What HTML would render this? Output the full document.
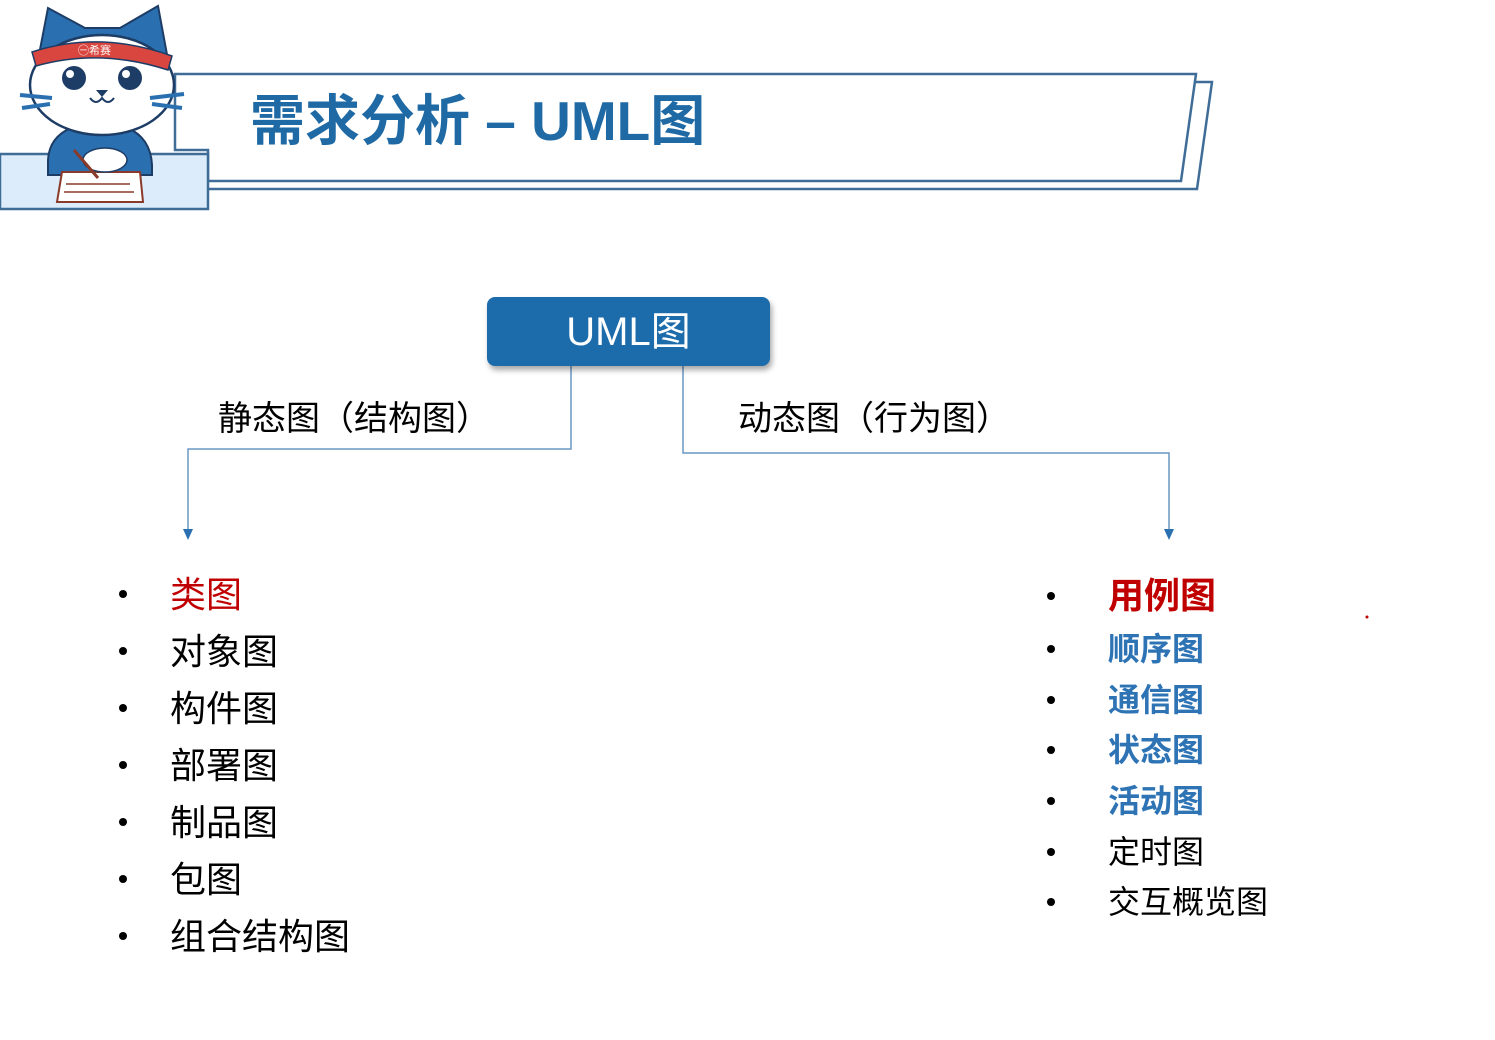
<!DOCTYPE html>
<html><head><meta charset="utf-8"><style>
body{margin:0;width:1495px;height:1040px;background:#fff;position:relative;overflow:hidden;font-family:"Liberation Sans","Noto Sans CJK SC",sans-serif}
.t{position:absolute;white-space:nowrap;line-height:1}
.b{position:absolute;width:8px;height:8px;border-radius:50%;background:#000}
</style></head><body>
<svg width="1495" height="1040" style="position:absolute;left:0;top:0">
<g fill="none" stroke="#3f6d97" stroke-width="2.5">
<polyline points="1196,82 1212,82 1197,189 208,189"/>
<polygon points="175,74 1196,74 1181,181 208,181 208,150 175,150" fill="#fff"/>
</g>
<rect x="0" y="154" width="208" height="55" fill="#dcecfa" stroke="#3f6d97" stroke-width="2.5"/>
<path d="M38,60 L48,8 L85,28 L120,28 L158,6 L168,60 Z" fill="#2a6fb0" stroke="#1d3d66" stroke-width="2"/>
<path d="M48,160 Q50,125 100,122 Q150,125 152,165 L152,175 L48,175 Z" fill="#2a6fb0" stroke="#1d3d66" stroke-width="2"/>
<ellipse cx="102" cy="85" rx="72" ry="50" fill="#fff" stroke="#1d3d66" stroke-width="2.5"/>
<path d="M32,52 Q100,30 172,56 L168,70 Q100,48 36,66 Z" fill="#d9463f" stroke="#1d3d66" stroke-width="1.5"/>
<text x="78" y="54" font-size="11" fill="#fff" font-family="Liberation Sans,Noto Sans CJK SC,sans-serif">㊀希赛</text>
<circle cx="74" cy="78" r="12" fill="#1d3d66"/><circle cx="130" cy="78" r="12" fill="#1d3d66"/>
<circle cx="70" cy="74" r="4" fill="#fff"/><circle cx="126" cy="74" r="4" fill="#fff"/>
<path d="M96,90 L108,90 L102,97 Z" fill="#1d3d66"/>
<path d="M90,98 Q96,106 102,98 Q108,106 114,98" fill="none" stroke="#1d3d66" stroke-width="2"/>
<path d="M20,95 L52,98 M22,108 L50,104 M150,98 L184,94 M152,104 L182,108" stroke="#2a6fb0" stroke-width="4"/>
<polygon points="62,172 140,172 143,202 57,202" fill="#fff" stroke="#8a3a2a" stroke-width="2"/>
<path d="M66,184 L130,184 M64,192 L134,192" stroke="#8a3a2a" stroke-width="1.5"/>
<ellipse cx="105" cy="160" rx="22" ry="12" fill="#fff" stroke="#1d3d66" stroke-width="1.5"/>
<line x1="74" y1="150" x2="98" y2="178" stroke="#8a3a2a" stroke-width="3"/>
<g fill="none" stroke="#6a98c4" stroke-width="1.5">
<polyline points="571,366 571,449 188,449 188,532"/>
<polyline points="683,366 683,453 1169,453 1169,532"/>
</g>
<polygon points="183,529 193,529 188,540" fill="#2a6fb0"/>
<polygon points="1164,529 1174,529 1169,540" fill="#2a6fb0"/>
<circle cx="1367" cy="617" r="1.5" fill="#c00000"/>
</svg>
<div class="t" style="left:250px;top:94px;font-size:55px;font-weight:bold;color:#1f6aa5">需求分析 – UML图</div>
<div style="position:absolute;left:487px;top:297px;width:283px;height:69px;background:#1c6bab;border-radius:8px;box-shadow:2px 4px 6px rgba(0,0,0,.35);color:#fff;font-size:40px;line-height:71px;text-align:center">UML图</div>
<div class="t" style="left:218px;top:402px;font-size:34px">静态图（结构图）</div>
<div class="t" style="left:738px;top:402px;font-size:34px">动态图（行为图）</div>

<div class="b" style="left:119px;top:590px"></div><div class="t" style="left:170px;top:577px;font-size:36px;color:#c00000">类图</div>
<div class="b" style="left:119px;top:647px"></div><div class="t" style="left:170px;top:634px;font-size:36px">对象图</div>
<div class="b" style="left:119px;top:704px"></div><div class="t" style="left:170px;top:691px;font-size:36px">构件图</div>
<div class="b" style="left:119px;top:761px"></div><div class="t" style="left:170px;top:748px;font-size:36px">部署图</div>
<div class="b" style="left:119px;top:818px"></div><div class="t" style="left:170px;top:805px;font-size:36px">制品图</div>
<div class="b" style="left:119px;top:875px"></div><div class="t" style="left:170px;top:862px;font-size:36px">包图</div>
<div class="b" style="left:119px;top:932px"></div><div class="t" style="left:170px;top:919px;font-size:36px">组合结构图</div>

<div class="b" style="left:1047px;top:592px"></div><div class="t" style="left:1108px;top:578px;font-size:36px;font-weight:bold;color:#c00000">用例图</div>
<div class="b" style="left:1047px;top:645px"></div><div class="t" style="left:1108px;top:633px;font-size:32px;font-weight:bold;color:#2e74b5">顺序图</div>
<div class="b" style="left:1047px;top:696px"></div><div class="t" style="left:1108px;top:684px;font-size:32px;font-weight:bold;color:#2e74b5">通信图</div>
<div class="b" style="left:1047px;top:746px"></div><div class="t" style="left:1108px;top:734px;font-size:32px;font-weight:bold;color:#2e74b5">状态图</div>
<div class="b" style="left:1047px;top:797px"></div><div class="t" style="left:1108px;top:785px;font-size:32px;font-weight:bold;color:#2e74b5">活动图</div>
<div class="b" style="left:1047px;top:848px"></div><div class="t" style="left:1108px;top:836px;font-size:32px">定时图</div>
<div class="b" style="left:1047px;top:898px"></div><div class="t" style="left:1108px;top:886px;font-size:32px">交互概览图</div>
</body></html>
